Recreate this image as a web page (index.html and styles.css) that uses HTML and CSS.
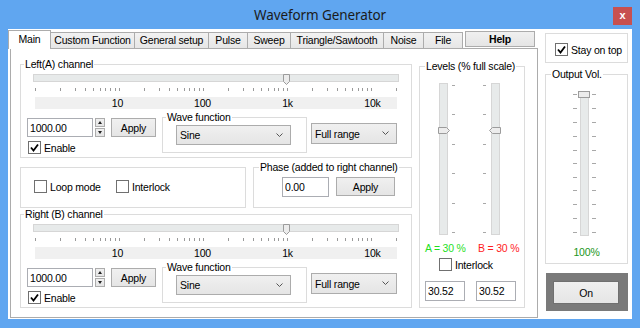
FILE: index.html
```html
<!DOCTYPE html>
<html lang="en">
<head>
  <meta charset="UTF-8" />
  <title>Waveform Generator</title>
  <link rel="stylesheet" href="styles.css">
</head>
<body>

<div class="window">
  <div class="titlebar">
    <span class="title">Waveform Generator</span>
    <span class="close">x</span>
  </div>

  <div class="client">
    <div class="tabctl">
      <div class="tabs">
        <div class="tab active">Main</div>
        <div class="tab t-custom">Custom Function</div>
        <div class="tab t-general">General setup</div>
        <div class="tab t-pulse">Pulse</div>
        <div class="tab t-sweep">Sweep</div>
        <div class="tab t-tri">Triangle/Sawtooth</div>
        <div class="tab t-noise">Noise</div>
        <div class="tab t-file">File</div>
        <button class="btn help">Help</button>
      </div>

      <div class="page">
        <div class="leftcol">
          <!-- Left channel -->
          <fieldset class="channel">
            <legend>Left(A) channel</legend>
            <svg class="freq" width="368" height="18">
              <rect x="1.5" y="1.5" width="365" height="7" fill="#e7eaea" stroke="#d6d6d6"/>
              <path d="M3.5 15v3M28.5 15v3M43.5 15v3M53.5 15v3M61.5 15v3M68.5 15v3M73.5 15v3M78.5 15v3M83.5 15v3M87.5 15v3M112.5 15v3M127.5 15v3M137.5 15v3M145.5 15v3M152.5 15v3M157.5 15v3M162.5 15v3M167.5 15v3M171.5 15v3M196.5 15v3M211.5 15v3M221.5 15v3M229.5 15v3M236.5 15v3M242.5 15v3M246.5 15v3M251.5 15v3M255.5 15v3M280.5 15v3M295.5 15v3M305.5 15v3M313.5 15v3M320.5 15v3M326.5 15v3M330.5 15v3M335.5 15v3M339.5 15v3M364.5 15v3" stroke="#9a9a9a"/>
              <polygon points="251.5,1.5 257.5,1.5 257.5,8.5 254.5,11.5 251.5,8.5" fill="#ececec" stroke="#9c9c9c"/>
            </svg>
            <div class="scale"><span>10</span><span>100</span><span>1k</span><span>10k</span></div>
            <div class="ctrlrow">
              <div class="ctrlleft">
                <div class="inrow">
                  <input class="txt freqin" type="text" value="1000.00">
                  <div class="spin"><span class="up"></span><span class="down"></span></div>
                  <button class="btn apply">Apply</button>
                </div>
                <label class="check enable"><span class="cb"><svg width="11" height="11"><path d="M2 5.5l2.5 3 4.5-6" fill="none" stroke="#000" stroke-width="1.8"/></svg></span>Enable</label>
              </div>
              <fieldset class="wave">
                <legend>Wave function</legend>
                <div class="combo sine"><span>Sine</span><svg width="7" height="5"><polyline points="0.5,0.5 3.5,3.5 6.5,0.5" fill="none" stroke="#555"/></svg></div>
              </fieldset>
              <div class="combo range"><span>Full range</span><svg width="7" height="5"><polyline points="0.5,0.5 3.5,3.5 6.5,0.5" fill="none" stroke="#555"/></svg></div>
            </div>
          </fieldset>

          <div class="midrow">
            <div class="loopbox">
              <label class="check loop"><span class="cb"></span>Loop mode</label>
              <label class="check"><span class="cb"></span>Interlock</label>
            </div>
            <fieldset class="phase">
              <legend>Phase (added to right channel)</legend>
              <div class="phrow">
                <input class="txt phasein" type="text" value="0.00">
                <button class="btn phapply">Apply</button>
              </div>
            </fieldset>
          </div>

          <!-- Right channel -->
          <fieldset class="channel">
            <legend>Right (B) channel</legend>
            <svg class="freq" width="368" height="18">
              <rect x="1.5" y="1.5" width="365" height="7" fill="#e7eaea" stroke="#d6d6d6"/>
              <path d="M3.5 15v3M28.5 15v3M43.5 15v3M53.5 15v3M61.5 15v3M68.5 15v3M73.5 15v3M78.5 15v3M83.5 15v3M87.5 15v3M112.5 15v3M127.5 15v3M137.5 15v3M145.5 15v3M152.5 15v3M157.5 15v3M162.5 15v3M167.5 15v3M171.5 15v3M196.5 15v3M211.5 15v3M221.5 15v3M229.5 15v3M236.5 15v3M242.5 15v3M246.5 15v3M251.5 15v3M255.5 15v3M280.5 15v3M295.5 15v3M305.5 15v3M313.5 15v3M320.5 15v3M326.5 15v3M330.5 15v3M335.5 15v3M339.5 15v3M364.5 15v3" stroke="#9a9a9a"/>
              <polygon points="251.5,1.5 257.5,1.5 257.5,8.5 254.5,11.5 251.5,8.5" fill="#ececec" stroke="#9c9c9c"/>
            </svg>
            <div class="scale"><span>10</span><span>100</span><span>1k</span><span>10k</span></div>
            <div class="ctrlrow">
              <div class="ctrlleft">
                <div class="inrow">
                  <input class="txt freqin" type="text" value="1000.00">
                  <div class="spin"><span class="up"></span><span class="down"></span></div>
                  <button class="btn apply">Apply</button>
                </div>
                <label class="check enable"><span class="cb"><svg width="11" height="11"><path d="M2 5.5l2.5 3 4.5-6" fill="none" stroke="#000" stroke-width="1.8"/></svg></span>Enable</label>
              </div>
              <fieldset class="wave">
                <legend>Wave function</legend>
                <div class="combo sine"><span>Sine</span><svg width="7" height="5"><polyline points="0.5,0.5 3.5,3.5 6.5,0.5" fill="none" stroke="#555"/></svg></div>
              </fieldset>
              <div class="combo range"><span>Full range</span><svg width="7" height="5"><polyline points="0.5,0.5 3.5,3.5 6.5,0.5" fill="none" stroke="#555"/></svg></div>
            </div>
          </fieldset>
        </div>

        <fieldset class="levels">
          <legend>Levels (% full scale)</legend>
          <svg class="lvlsvg" width="104" height="160">
            <rect x="19.5" y="3.5" width="8" height="151" fill="#e7eaea" stroke="#d6d6d6"/>
            <rect x="71.5" y="3.5" width="8" height="151" fill="#e7eaea" stroke="#d6d6d6"/>
            <path d="M32 5.5h3M32 34.5h3M32 64.5h3M32 93.5h3M32 123.5h3M32 152.5h3M63 5.5h3M63 34.5h3M63 64.5h3M63 93.5h3M63 123.5h3M63 152.5h3" stroke="#a8a8a8"/>
            <polygon points="18.5,47.5 26.5,47.5 29.5,50.5 26.5,53.5 18.5,53.5" fill="#ececec" stroke="#9c9c9c"/>
            <polygon points="80.5,47.5 72.5,47.5 69.5,50.5 72.5,53.5 80.5,53.5" fill="#ececec" stroke="#9c9c9c"/>
          </svg>
          <div class="ab"><span class="a">A = 30 %</span><span class="b">B = 30 %</span></div>
          <label class="check lvlcheck"><span class="cb"></span>Interlock</label>
          <div class="lvlins">
            <input class="txt lvlin" type="text" value="30.52">
            <input class="txt lvlin" type="text" value="30.52">
          </div>
        </fieldset>
      </div>
    </div>

    <div class="side">
      <div class="stay">
        <label class="check"><span class="cb"><svg width="11" height="11"><path d="M2 5.5l2.5 3 4.5-6" fill="none" stroke="#000" stroke-width="1.8"/></svg></span>Stay on top</label>
      </div>
      <fieldset class="outvol">
        <legend>Output Vol.</legend>
        <svg class="volsvg" width="81" height="152">
          <rect x="34.5" y="4.5" width="8" height="143" fill="#e7eaea" stroke="#d6d6d6"/>
          <path d="M27 6.5h4M27 20.5h4M27 34.5h4M27 48.5h4M27 62.5h4M27 75.5h4M27 89.5h4M27 102.5h4M27 116.5h4M27 130.5h4M27 144.5h4M46 6.5h4M46 20.5h4M46 34.5h4M46 48.5h4M46 62.5h4M46 75.5h4M46 89.5h4M46 102.5h4M46 116.5h4M46 130.5h4M46 144.5h4" stroke="#a8a8a8"/>
          <rect x="32.5" y="3.5" width="11" height="6" fill="#ececec" stroke="#9c9c9c"/>
        </svg>
        <div class="pct">100%</div>
      </fieldset>
      <div class="onpanel">
        <button class="btn on">On</button>
      </div>
    </div>
  </div>
</div>

</body>
</html>
```

FILE: styles.css
```css
body {
  margin: 0;
  background: #60a6f0;
  font-family: "Liberation Sans", Arial, sans-serif;
  font-size: 10.5px;
  letter-spacing: -0.2px;
  color: #000;
}

.window {
  width: 640px;
  height: 328px;
  background: #60a6f0;
  display: flex;
  flex-direction: column;
}

.titlebar {
  height: 29px;
  display: grid;
  grid-template-columns: 1fr auto 1fr;
}

.title {
  grid-column: 2;
  align-self: center;
  font-family: "Noto Sans", sans-serif;
  font-size: 13.5px;
  letter-spacing: -0.1px;
  color: #1b1b1b;
}

.close {
  grid-column: 3;
  justify-self: end;
  margin: 7px 8px 0 0;
  width: 19px;
  height: 18px;
  background: #c75050;
  color: #fff;
  font-weight: bold;
  font-size: 11px;
  line-height: 16px;
  text-align: center;
}

.client {
  height: 290px;
  margin: 0 8px;
  background: #fff;
  display: flex;
}

/* tab control */
.tabctl {
  margin-left: 2px;
  width: 528px;
  display: flex;
  flex-direction: column;
}

.tabs {
  height: 19px;
  display: flex;
  align-items: flex-end;
}

.tab {
  box-sizing: border-box;
  height: 16px;
  margin-left: -1px;
  border: 1px solid #acacac;
  border-bottom: none;
  background: linear-gradient(#f2f2f2, #e6e6e6);
  text-align: center;
  line-height: 15px;
  white-space: nowrap;
}

.tab.active {
  position: relative;
  z-index: 1;
  width: 43px;
  height: 19px;
  margin-left: -2px;
  margin-bottom: -1px;
  background: #fff;
  line-height: 17px;
}

.t-custom { width: 85px; }
.t-general { width: 75px; }
.t-pulse { width: 40px; }
.t-sweep { width: 44px; }
.t-tri { width: 94px; }
.t-noise { width: 41px; }
.t-file { width: 40px; }

.page {
  box-sizing: border-box;
  height: 270px;
  border: 1px solid #acacac;
  background: #fff;
  padding: 9px 0 0 9px;
  display: flex;
}

/* common controls */
fieldset {
  box-sizing: border-box;
  margin: 0;
  padding: 0;
  min-width: 0;
  border: 1px solid #dcdcdc;
}

legend {
  padding: 0 1px;
  margin-left: 4px;
  line-height: 12px;
}

.btn {
  box-sizing: border-box;
  padding: 0;
  border: 1px solid #acacac;
  background: linear-gradient(#f0f0f0, #e5e5e5);
  font: inherit;
  letter-spacing: inherit;
  color: #000;
}

.txt {
  box-sizing: border-box;
  margin: 0;
  padding: 0 2px;
  border: 1px solid #abadb3;
  background: #fff;
  font: inherit;
  letter-spacing: inherit;
  color: #000;
}

.combo {
  box-sizing: border-box;
  display: flex;
  justify-content: space-between;
  align-items: center;
  padding: 0 7px 0 3px;
  border: 1px solid #acacac;
  background: linear-gradient(#f0f0f0, #e5e5e5);
}

.check {
  display: flex;
  align-items: center;
  gap: 3px;
  white-space: nowrap;
}

.cb {
  box-sizing: border-box;
  width: 13px;
  height: 13px;
  border: 1px solid #707070;
  background: #fff;
  display: flex;
  align-items: center;
  justify-content: center;
}

.cb svg {
  display: block;
}

.help {
  width: 70px;
  height: 16px;
  margin: 0 0 1px 2px;
  font-weight: bold;
  line-height: 14px;
}

/* channel groups */
.leftcol {
  width: 392px;
  display: flex;
  flex-direction: column;
}

.channel {
  width: 392px;
  height: 100px;
}

.channel legend {
  margin-left: 3px;
}

.freq {
  display: block;
  margin: 3px 0 0 11px;
}

.scale {
  box-sizing: border-box;
  width: 362px;
  height: 12px;
  margin: 6px 0 0 14px;
  padding-left: 40px;
  background: #f0f0f0;
  display: grid;
  grid-template-columns: repeat(4, 85px);
  line-height: 12px;
  text-align: center;
}

.ctrlrow {
  display: flex;
  align-items: flex-start;
  margin-top: 2px;
}

.ctrlleft {
  width: 129px;
  margin: 7px 0 0 6px;
}

.inrow {
  display: flex;
}

.freqin {
  width: 66px;
  height: 19px;
}

.spin {
  width: 10px;
  height: 19px;
  margin-left: 2px;
  display: flex;
  flex-direction: column;
  justify-content: space-between;
}

.spin span {
  box-sizing: border-box;
  height: 9px;
  border: 1px solid #acacac;
  background: linear-gradient(#f0f0f0, #e5e5e5);
  position: relative;
}

.spin span::before {
  content: "";
  position: absolute;
  left: 2px;
  top: 2px;
  border-left: 2px solid transparent;
  border-right: 2px solid transparent;
}

.spin .up::before {
  border-bottom: 3px solid #222;
}

.spin .down::before {
  border-top: 3px solid #222;
}

.apply {
  width: 45px;
  height: 19px;
  margin-left: 6px;
}

.enable {
  margin: 4px 0 0 1px;
}

.wave {
  width: 145px;
  height: 42px;
  margin-left: 6px;
}

.sine {
  width: 115px;
  height: 20px;
  margin: 2px 0 0 13px;
}

.range {
  width: 86px;
  height: 21px;
  margin: 12px 0 0 4px;
}

.midrow {
  display: flex;
  align-items: flex-start;
  margin-top: 3px;
}

.loopbox {
  box-sizing: border-box;
  width: 226px;
  height: 41px;
  margin-top: 6px;
  border: 1px solid #dcdcdc;
  padding: 12px 0 0 13px;
  display: flex;
  align-items: flex-start;
}

.loop {
  width: 82px;
}

.phase {
  width: 159px;
  height: 47px;
  margin-left: 7px;
}

.phase legend {
  margin-left: 5px;
}

.phrow {
  display: flex;
  align-items: flex-start;
  margin: 4px 0 0 28px;
}

.phasein {
  width: 47px;
  height: 20px;
}

.phapply {
  width: 59px;
  height: 19px;
  margin-left: 7px;
}

/* levels */
.levels {
  width: 106px;
  height: 248px;
  margin: 2px 0 0 7px;
}

.levels legend {
  margin-left: 5px;
}

.lvlsvg {
  display: block;
  margin-top: 8px;
}

.ab {
  display: flex;
  margin-top: 2px;
  padding-left: 5px;
  line-height: 12px;
}

.ab .a {
  width: 53px;
  color: #1fe01f;
}

.ab .b {
  color: #ff1e1e;
}

.lvlcheck {
  margin: 4px 0 0 19px;
}

.lvlins {
  display: flex;
  gap: 11px;
  margin: 10px 0 0 5px;
}

.lvlin {
  width: 40px;
  height: 20px;
}

/* right side */
.side {
  width: 83px;
  margin-left: 7px;
}

.stay {
  box-sizing: border-box;
  height: 30px;
  margin-top: 4px;
  border: 1px solid #dcdcdc;
  padding: 9px 0 0 9px;
}

.outvol {
  width: 83px;
  height: 196px;
  margin-top: 5px;
}

.outvol legend {
  margin-left: 5px;
}

.volsvg {
  display: block;
  margin-top: 8px;
}

.pct {
  margin-top: 6px;
  line-height: 12px;
  text-align: center;
  color: #219621;
}

.onpanel {
  box-sizing: border-box;
  width: 82px;
  height: 38px;
  margin: 9px 0 0 1px;
  padding: 8px 0 0 7px;
  background: #7a7a7a;
}

.on {
  display: block;
  width: 66px;
  height: 23px;
  border-color: #707070;
}
```
